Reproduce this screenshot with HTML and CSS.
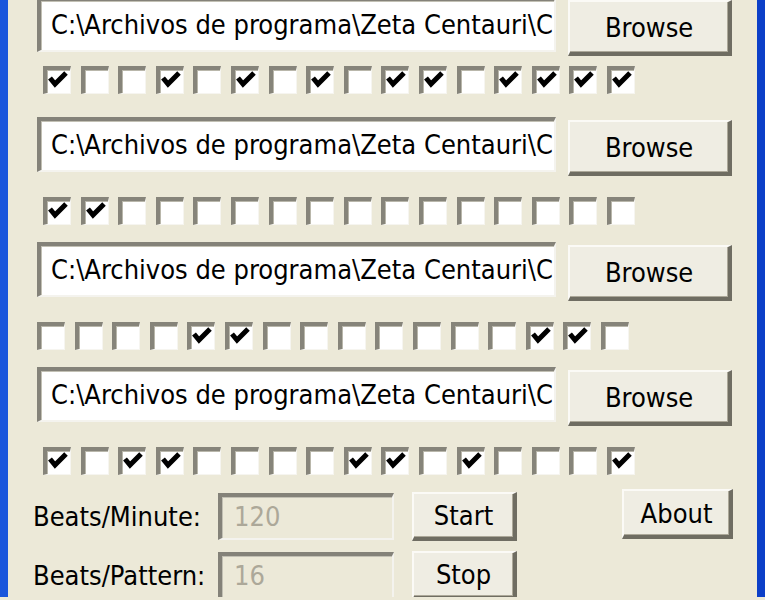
FILE: index.html
```html
<!DOCTYPE html>
<html lang="es">
<head>
    <meta charset="UTF-8">
    <title>Drum Machine</title>
    <link rel="stylesheet" href="styles.css">
</head>
<body>
    <svg class="defs" width="0" height="0">
        <symbol id="tick" viewBox="0 0 22 22">
            <polyline points="3,8 8,14 19,3" fill="none" stroke="#000" stroke-width="5"></polyline>
        </symbol>
    </svg>
    <div class="window">
        <div class="content">

            <div class="track first">
                <div class="path-row">
                    <div class="textbox">C:\Archivos de programa\Zeta Centauri\C</div>
                    <button class="btn browse">Browse</button>
                </div>
                <div class="checks" data-pattern="1001010101101111"></div>
            </div>

            <div class="track">
                <div class="path-row">
                    <div class="textbox">C:\Archivos de programa\Zeta Centauri\C</div>
                    <button class="btn browse">Browse</button>
                </div>
                <div class="checks" data-pattern="1100000000000000"></div>
            </div>

            <div class="track">
                <div class="path-row">
                    <div class="textbox">C:\Archivos de programa\Zeta Centauri\C</div>
                    <button class="btn browse">Browse</button>
                </div>
                <div class="checks shifted" data-pattern="0000110000000110"></div>
            </div>

            <div class="track">
                <div class="path-row">
                    <div class="textbox">C:\Archivos de programa\Zeta Centauri\C</div>
                    <button class="btn browse">Browse</button>
                </div>
                <div class="checks" data-pattern="1011000011010001"></div>
            </div>

            <div class="controls">
                <div class="fields">
                    <label class="label">Beats/Minute:</label>
                    <div class="textbox disabled">120</div>
                    <button class="btn small">Start</button>
                    <label class="label">Beats/Pattern:</label>
                    <div class="textbox disabled">16</div>
                    <button class="btn small">Stop</button>
                </div>
                <button class="btn small about">About</button>
            </div>

        </div>
    </div>
    <script>
        // build the 16 step checkboxes of each track
        document.querySelectorAll('.checks').forEach(function (row) {
            const pattern = row.dataset.pattern;
            for (let i = 0; i < pattern.length; i++) {
                const box = document.createElement('span');
                box.className = 'cb';
                if (pattern[i] === '1') {
                    box.innerHTML = '<svg width="22" height="22"><use href="#tick"></use></svg>';
                }
                row.appendChild(box);
            }
        });
    </script>
</body>
</html>
```

FILE: styles.css
```css
body {
    margin: 0;
    background-color: #ece9d8;
    font-family: "DejaVu Sans", Verdana, sans-serif;
    font-stretch: condensed;
    font-size: 27px;
    color: #000;
    overflow: hidden;
}
.defs {
    position: absolute;
}
.window {
    width: 765px;
    height: 600px;
    box-sizing: border-box;
    border-left: 8px solid #1a56dc;
    border-right: 8px solid #0c3fc8;
    background-color: #ece9d8;
}
.content {
    width: 695px;
    padding-left: 29px;
}
.track {
    margin-bottom: 17px;
}
.track.first {
    margin-top: -3px;
    margin-bottom: 23px;
}
.path-row {
    display: flex;
    align-items: flex-start;
}
.textbox {
    box-sizing: border-box;
    width: 520px;
    height: 55px;
    padding: 0 6px 0 10px;
    background-color: #fff;
    border-style: solid;
    border-width: 4px 2px 2px 4px;
    border-color: #848279 #f4f3ee #f4f3ee #848279;
    box-shadow: inset 1px 1px 0 #c2c0b4;
    white-space: nowrap;
    overflow: hidden;
    line-height: 48px;
}
.btn {
    box-sizing: border-box;
    font-family: inherit;
    font-stretch: condensed;
    font-size: 27px;
    color: #000;
    background-color: #efede3;
    border-style: solid;
    border-width: 2px 4px 4px 2px;
    border-color: #fbfaf6 #6f6d62 #6f6d62 #fbfaf6;
    box-shadow: inset -1px -1px 0 #aca899;
    padding: 0;
}
.browse {
    width: 164px;
    height: 56px;
    margin-left: 12px;
    margin-top: 3px;
}
.checks {
    display: flex;
    gap: 9.6px;
    margin-top: 21px;
    padding-left: 6px;
}
.track.first .checks {
    margin-top: 10px;
}
.checks.shifted {
    padding-left: 0;
}
.cb {
    box-sizing: border-box;
    width: 28px;
    height: 28px;
    background-color: #fff;
    border-style: solid;
    border-width: 4px 1px 1px 4px;
    border-color: #86847a #f6f5f0 #f6f5f0 #86847a;
    box-shadow: inset 1px 1px 0 #b9b7ab;
}
.cb svg {
    display: block;
}
.controls {
    display: flex;
    align-items: flex-start;
    margin-top: 13px;
    margin-left: -4px;
}
.fields {
    display: grid;
    grid-template-columns: 185px 176px 123px;
    grid-template-rows: 49px 52px;
    row-gap: 8px;
    align-items: center;
}
.label {
    white-space: nowrap;
}
.textbox.disabled {
    width: 176px;
    height: 47px;
    padding-left: 12px;
    background-color: #ece9d8;
    color: #aca899;
    line-height: 40px;
}
.small {
    width: 105px;
    height: 49px;
    justify-self: end;
}
.about {
    width: 111px;
    height: 50px;
    margin-left: auto;
    margin-top: -3px;
    margin-right: -1px;
}
```
